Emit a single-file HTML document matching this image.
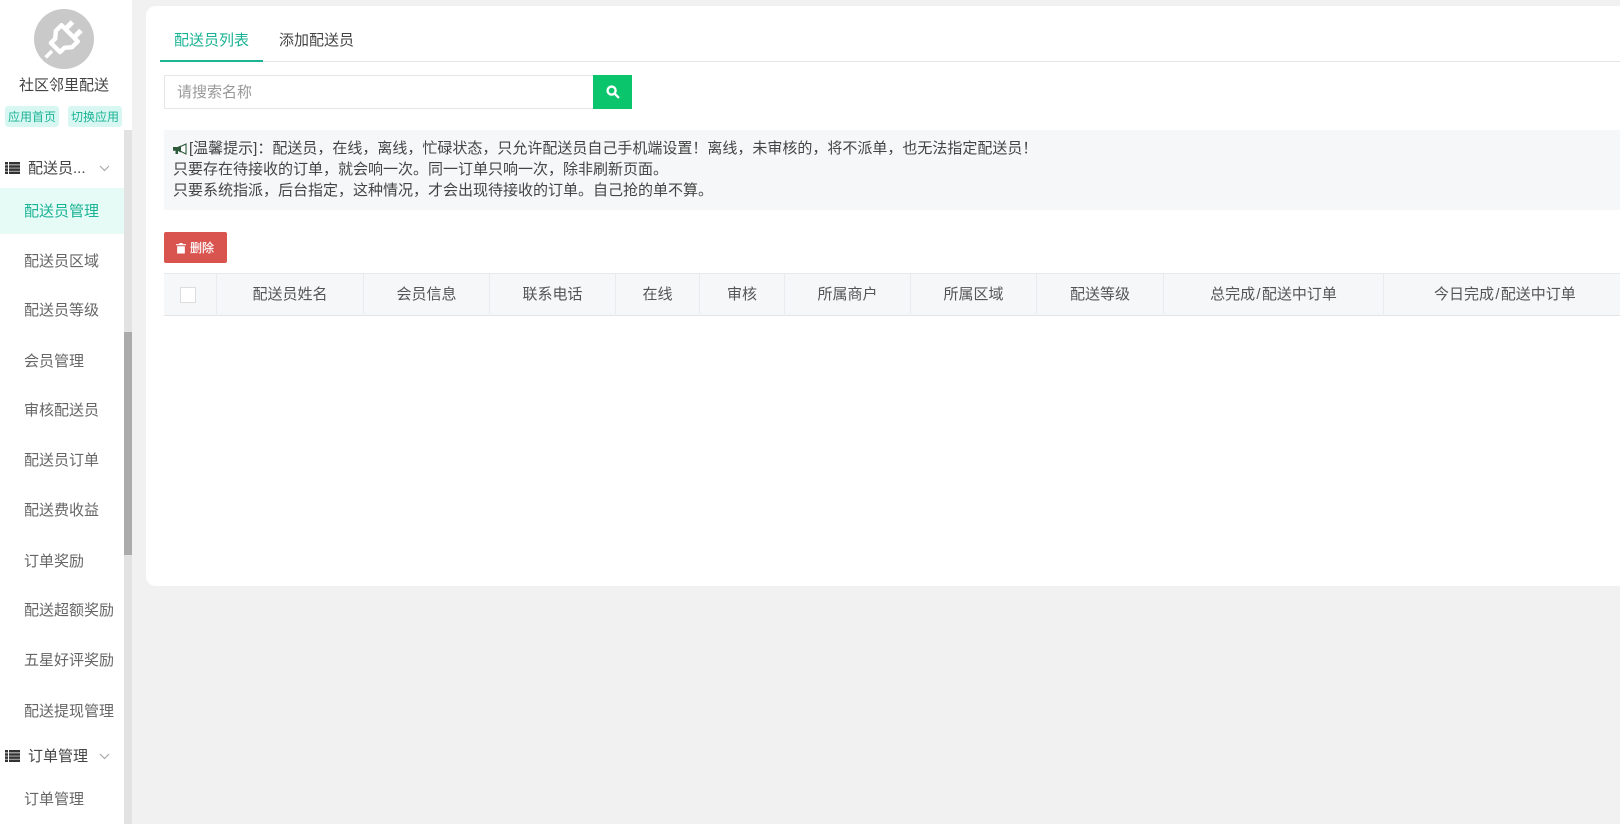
<!DOCTYPE html>
<html lang="zh"><head><meta charset="utf-8"><title>配送员管理</title>
<style>
html,body{margin:0;padding:0;width:1620px;height:824px;overflow:hidden;background:#f1f1f1}
body{position:relative;font-family:"Liberation Sans","Noto Sans CJK SC",sans-serif;font-size:15px;color:#444}
.a{position:absolute;white-space:nowrap}
#side{position:absolute;left:0;top:0;width:132px;height:824px;background:#fff}
.tag{position:absolute;top:106px;height:21px;line-height:22px;width:54px;text-align:center;background:#d9f7f2;color:#1ab394;font-size:12px;border-radius:3px}
.it{position:absolute;left:24px;color:#666;line-height:20px}
.hd{position:absolute;left:28px;color:#444;line-height:20px}
#card{position:absolute;left:146px;top:6px;width:1500px;height:580px;background:#fff;border-radius:10px}
.c{position:absolute;top:273px;height:41px;line-height:43px;text-align:center;border-left:1px solid #e9ebee;color:#555;box-sizing:border-box}
.s{margin:0 1.300px}
</style></head><body>
<div id="side">
<svg class="a" style="left:34px;top:9px" width="60" height="60" viewBox="0 0 60 60"><circle cx="30" cy="30" r="30" fill="#c9c9c9"/>
<g transform="rotate(45 30 30)" fill="none" stroke="#fff" stroke-width="4.400"><path d="M18.500 22h23v8l-5 6v6h-13v-6l-5-6z" stroke-linejoin="round"/><path d="M24 21v-9M36 21v-9" stroke-width="5"/><path d="M30 47v9" stroke-width="3.600"/></g></svg>
<div class="a" style="left:19px;top:76px;line-height:20px;color:#444">社区邻里配送</div>
<div class="tag" style="left:5px">应用首页</div><div class="tag" style="left:68px">切换应用</div>
<div class="a" style="left:124px;top:130px;width:8px;height:694px;background:#e2e2e2"></div>
<div class="a" style="left:124px;top:332px;width:8px;height:223px;background:#ababab"></div>
<svg class="a" style="left:5px;top:162px" width="15" height="12" viewBox="0 0 15 12" fill="#333"><path d="M0 0h3v2.500H0zM4 0h11v2.500H4zM0 3.200h3v2.500H0zM4 3.200h11v2.500H4zM0 6.400h3v2.500H0zM4 6.400h11v2.500H4zM0 9.500h3V12H0zM4 9.500h11V12H4z"/></svg>
<div class="hd" style="top:159px">配送员...</div>
<svg class="a" style="left:99px;top:165px" width="11" height="7" viewBox="0 0 11 7" fill="none" stroke="#aaa" stroke-width="1.200"><path d="M1 1l4.500 4.500L10 1"/></svg>
<div class="a" style="left:0;top:188px;width:124px;height:46px;background:#e6fbf6"></div>
<div class="it" style="top:202px;color:#1ab394">配送员管理</div>
<div class="it" style="top:252px">配送员区域</div>
<div class="it" style="top:301px">配送员等级</div>
<div class="it" style="top:352px">会员管理</div>
<div class="it" style="top:401px">审核配送员</div>
<div class="it" style="top:451px">配送员订单</div>
<div class="it" style="top:501px">配送费收益</div>
<div class="it" style="top:552px">订单奖励</div>
<div class="it" style="top:601px">配送超额奖励</div>
<div class="it" style="top:651px">五星好评奖励</div>
<div class="it" style="top:702px">配送提现管理</div>
<svg class="a" style="left:5px;top:750px" width="15" height="12" viewBox="0 0 15 12" fill="#333"><path d="M0 0h3v2.500H0zM4 0h11v2.500H4zM0 3.200h3v2.500H0zM4 3.200h11v2.500H4zM0 6.400h3v2.500H0zM4 6.400h11v2.500H4zM0 9.500h3V12H0zM4 9.500h11V12H4z"/></svg>
<div class="hd" style="top:747px">订单管理</div>
<svg class="a" style="left:99px;top:753px" width="11" height="7" viewBox="0 0 11 7" fill="none" stroke="#aaa" stroke-width="1.200"><path d="M1 1l4.500 4.500L10 1"/></svg>
<div class="it" style="top:790px">订单管理</div>
</div>
<div id="card"></div>
<div class="a" style="left:174px;top:31px;line-height:20px;color:#1ab394">配送员列表</div>
<div class="a" style="left:279px;top:31px;line-height:20px;color:#444">添加配送员</div>
<div class="a" style="left:160px;top:61px;width:1460px;height:1px;background:#e4e5e7"></div>
<div class="a" style="left:160px;top:60px;width:103px;height:2px;background:#1ab394"></div>
<div class="a" style="left:164px;top:75px;width:429px;height:34px;border:1px solid #e5e6e7;border-right:0;box-sizing:border-box;line-height:34px;padding-left:12px;color:#999">请搜索名称</div>
<div class="a" style="left:593px;top:75px;width:39px;height:34px;background:#0bc56c"></div>
<svg class="a" style="left:606px;top:85px" width="14" height="14" viewBox="0 0 15 15" fill="none" stroke="#fff" stroke-width="2.500"><circle cx="6" cy="6" r="4.300"/><path d="M9.200 9.200l4 4" stroke-linecap="round"/></svg>
<div class="a" style="left:164px;top:130px;width:1456px;height:80px;background:#f6f7f9"></div>
<svg class="a" style="left:173px;top:143px" width="15" height="13" viewBox="0 0 15 13"><path d="M0 4h6.500v3.800H5V11H2.500V7.800H0z" fill="#2d5a3a"/><path d="M6 4.300l7-3.300v10L6 7.500z" fill="#fff" stroke="#2d5a3a" stroke-width="1.100"/><path d="M5 3.800l3-1.300v7L5 8z" fill="#2d5a3a"/></svg>
<div class="a" style="left:173px;top:138px;line-height:21px;color:#444"><span style="margin-left:16px">[温馨提示]：配送员，在线，离线，忙碌状态，只允许配送员自己手机端设置！离线，未审核的，将不派单，也无法指定配送员！</span><br>只要存在待接收的订单，就会响一次。同一订单只响一次，除非刷新页面。<br>只要系统指派，后台指定，这种情况，才会出现待接收的订单。自己抢的单不算。</div>
<div class="a" style="left:164px;top:232px;width:63px;height:31px;background:#d9534f;border-radius:2px"></div>
<svg class="a" style="left:176px;top:243px" width="10" height="11" viewBox="0 0 9 10" fill="#fff"><path d="M3 0h3v1h3v1H0V1h3zM1 3h7v6.500H1z"/></svg>
<div class="a" style="left:190px;top:238px;line-height:20px;color:#fff;font-size:12px;-webkit-text-stroke:.2px #fff">删除</div>
<div class="a" style="left:164px;top:273px;width:1456px;height:43px;background:#f6f7f9;border-top:1px solid #e7e9ec;border-bottom:1px solid #e2e4e7;box-sizing:border-box"></div>
<div class="a" style="left:180px;top:287px;width:16px;height:16px;background:#fff;border:1px solid #ddd;box-sizing:border-box"></div>
<div class="c" style="left:216px;width:147px">配送员姓名</div>
<div class="c" style="left:363px;width:126px">会员信息</div>
<div class="c" style="left:489px;width:126px">联系电话</div>
<div class="c" style="left:615px;width:84px">在线</div>
<div class="c" style="left:699px;width:85px">审核</div>
<div class="c" style="left:784px;width:126px">所属商户</div>
<div class="c" style="left:910px;width:126px">所属区域</div>
<div class="c" style="left:1036px;width:127px">配送等级</div>
<div class="c" style="left:1163px;width:220px">总完成<span class="s">/</span>配送中订单</div>
<div class="c" style="left:1383px;width:237px;text-align:left;padding-left:50px">今日完成<span class="s">/</span>配送中订单</div>
</body></html>
